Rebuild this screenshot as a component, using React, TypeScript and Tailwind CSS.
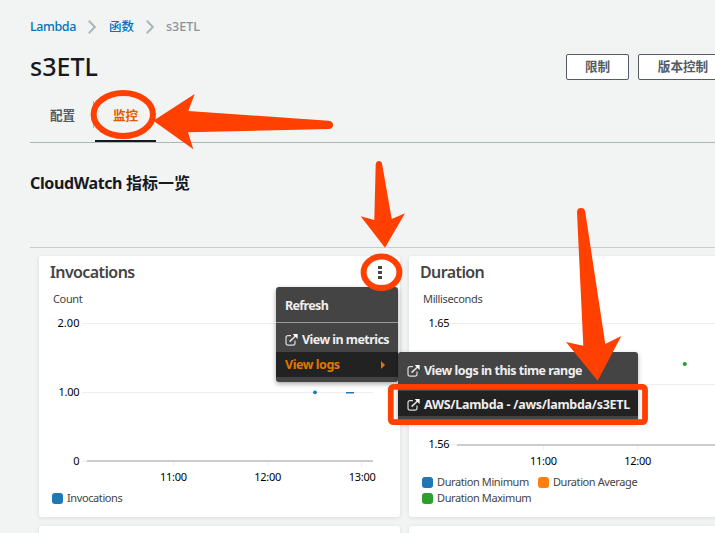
import type { ReactNode } from "react";

const FONT = "font-['Noto_Sans','Noto_Sans_CJK_SC',sans-serif]";

function Chevron() {
  return (
    <svg className="h-[14px] w-[8px]" viewBox="0 0 8 14" fill="none" stroke="#aab7b8" strokeWidth="2">
      <path d="M0.8 0.8 L6.8 7 L0.8 13.2" />
    </svg>
  );
}

function External() {
  return (
    <svg className="mb-px h-[12px] w-[13px] shrink-0" viewBox="0 0 13 12" fill="none" stroke="#ddd" strokeWidth="1.2">
      <path d="M6 1.7H3Q1 1.7 1 3.7V9Q1 11.2 3 11.2H8Q10 11.2 10 9V6.5" />
      <path d="M4.6 7.6 L10.5 2" strokeWidth="1.7" />
      <path d="M7.7 0H12.6V4.9Z" fill="#fff" stroke="none" />
    </svg>
  );
}

function Button({ children, width }: { children: ReactNode; width: string }) {
  return (
    <button className={`${width} h-[26px] shrink-0 rounded-[2px] border border-[#545b64] bg-white text-[12.6px] leading-[22px] font-bold text-[#545b64]`}>
      {children}
    </button>
  );
}

function Card({ children }: { children?: ReactNode }) {
  return <section className="h-[261px] w-[361px] shrink-0 overflow-hidden rounded-[3px] bg-white shadow-[0_1px_4px_rgba(0,0,0,0.1)]">{children}</section>;
}

function Legend({ color, label }: { color: string; label: string }) {
  return (
    <span className="flex h-4 items-center gap-[4px]">
      <i className="h-[11px] w-[11px] rounded-[3px]" style={{ background: color }} />
      <span className="text-[11px] tracking-[-0.4px] whitespace-nowrap text-[#444]">{label}</span>
    </span>
  );
}

function Tick({ x, y, width, anchor, children }: { x: number; y: number; width: number; anchor?: "middle" | "end"; children: string }) {
  return (
    <text x={x} y={y} textLength={width} textAnchor={anchor ?? "end"} fontSize="11" fill="#000">
      {children}
    </text>
  );
}

function InvocationsChart() {
  return (
    <svg className="block h-[176px] w-[361px]" viewBox="39 310 361 176">
      <path d="M82 323.5H373M82 392.5H373M82 461.5H87M173.5 462V466M267.5 462V466M361.5 462V467" stroke="#eee" />
      <path d="M87 461H373" stroke="#ccc" strokeWidth="2" />
      <circle cx="315" cy="392.3" r="1.9" fill="#1f77b4" />
      <path d="M346 392.7H354" stroke="#1f77b4" strokeWidth="1.6" />
      <Tick x={79.5} y={327} width={22}>2.00</Tick>
      <Tick x={79.5} y={396} width={21}>1.00</Tick>
      <Tick x={79.5} y={465} width={6}>0</Tick>
      <Tick x={173.5} y={481} width={27} anchor="middle">11:00</Tick>
      <Tick x={267.7} y={481} width={27} anchor="middle">12:00</Tick>
      <Tick x={362.3} y={481} width={27} anchor="middle">13:00</Tick>
    </svg>
  );
}

function DurationChart() {
  return (
    <svg className="block h-[161px] w-[361px]" viewBox="409 310 361 161">
      <path d="M452 323.5H743M452 384.5H743M452 444.5H457M543.5 445V450M637.5 445V450" stroke="#eee" />
      <path d="M457 445H743" stroke="#ccc" strokeWidth="2" />
      <circle cx="684.8" cy="364" r="2.1" fill="#2ca02c" />
      <Tick x={449.5} y={327} width={21}>1.65</Tick>
      <Tick x={449.5} y={448} width={21}>1.56</Tick>
      <Tick x={543.5} y={465} width={27} anchor="middle">11:00</Tick>
      <Tick x={637.8} y={465} width={27} anchor="middle">12:00</Tick>
    </svg>
  );
}

function Annotations() {
  return (
    <svg className="pointer-events-none absolute inset-0 h-[533px] w-[715px]" viewBox="0 0 715 533">
      <g fill="none" stroke="#ff4000" strokeWidth="6">
        <ellipse cx="123.3" cy="114.5" rx="29.7" ry="21.5" />
        <ellipse cx="381.5" cy="272.3" rx="17.9" ry="15.7" />
        <rect x="390.8" y="386.9" width="254.2" height="35.2" rx="2.5" strokeWidth="5.8" />
      </g>
      <g fill="#ff4000">
        <path d="M153.3 120.7L194.7 94L188.3 111L328.5 120.7Q333 121 333 125Q333 129 328.5 129L188 132.3L193.3 149.3Z" />
        <path d="M385 247.8L360.7 216.3L374.3 220L375.7 164.5Q376 161 379 161Q381.8 161 382.2 164.5L391.7 219L405 213.2Z" />
        <path d="M597.7 380.7L566 342L583.3 345.8L577 212.3Q577 208 581 208Q585 208 585.3 212.3L605.3 344L621.3 336Z" />
      </g>
    </svg>
  );
}

function Menus() {
  return (
    <div className="absolute top-[287px] left-[276px] text-[12.5px] font-bold whitespace-nowrap text-[#eee]">
      <div className="flex h-[95px] w-[122px] flex-col rounded-[3px] bg-[#444] shadow-[0_2px_5px_rgba(0,0,0,0.35)]">
        <div className="h-[35px] pl-[9px] leading-[37px] tracking-[-0.65px]">Refresh</div>
        <div className="h-px bg-[#999]" />
        <div className="flex h-[29px] items-center gap-[4px] pt-[5px] pl-[9px] tracking-[-0.55px]">
          <External />View in metrics
        </div>
        <div className="flex h-[25px] items-center justify-between bg-[#222] pt-px pr-[13px] pl-[9px] tracking-[-0.45px] text-[#e07700]">
          View logs
          <i className="border-y-[4px] border-l-[4px] border-y-transparent border-l-[#e07700]" />
        </div>
      </div>
      <div className="absolute top-[65px] left-[122px] h-[70px] w-[240px] rounded-[3px] bg-[#444] shadow-[0_2px_5px_rgba(0,0,0,0.3)]">
        <div className="flex h-[39px] items-center gap-[4px] pl-[9px] tracking-[-0.51px]">
          <External />View logs in this time range
        </div>
        <div className="flex h-[25px] items-center gap-[4px] bg-[#222] pt-[3px] pl-[9px] tracking-[-0.27px]">
          <External />AWS/Lambda - /aws/lambda/s3ETL
        </div>
      </div>
    </div>
  );
}

export default function App() {
  return (
    <main className={`relative h-[533px] w-[715px] overflow-hidden bg-[#f2f3f3] ${FONT}`}>
      <div className="flex h-[248px] flex-col pl-[30px]">
        <nav className="flex h-[54px] items-center text-[12.5px] font-medium text-[#0073bb]">
          <span className="w-[58px] tracking-[-0.4px]">Lambda</span>
          <Chevron />
          <span className="ml-[13px] w-[37px]">函数</span>
          <Chevron />
          <span className="ml-[12px] text-[12.5px] text-[#879596]">s3ETL</span>
        </nav>
        <div className="flex h-[26px] justify-between">
          <h1 className="text-[25px] leading-[25px] font-medium text-[#16191f]">s3ETL</h1>
          <div className="flex w-[149px] gap-[9px] overflow-hidden">
            <Button width="w-[63px]">限制</Button>
            <Button width="w-[90px]">版本控制</Button>
          </div>
        </div>
        <div className="flex h-[63px] items-end border-b border-[#aab7b8] text-[12.6px] font-bold">
          <div className="h-[41px] w-[63px] pl-[20px] leading-[29px] text-[#545b64]">配置</div>
          <div className="h-[41px] w-px"><i className="block h-[27px] w-px bg-[#aab7b8]" /></div>
          <div className="ml-px h-[41px] w-[61px] border-b-2 border-[#16191f] pl-[18px] leading-[29px] text-[#e05b00]">监控</div>
        </div>
        <h2 className="mt-[28px] text-[16px] leading-[24px] font-bold tracking-[-0.38px] text-[#16191f]">
          CloudWatch <span className="tracking-normal">指标一览</span>
        </h2>
        <div className="mt-auto border-b border-[#ccc]" />
      </div>
      <div className="mt-[8px] ml-[39px] grid w-[731px] grid-cols-[361px_361px] gap-[9px]">
        <Card>
          <header className="flex h-[32px] items-center justify-between pl-[11px] text-[16px] font-semibold tracking-[-0.6px] text-[#444]">
            Invocations
            <span className="mr-[18px] flex flex-col gap-[2px]">
              <i className="h-[3px] w-[4px] bg-[#444]" />
              <i className="h-[3px] w-[4px] bg-[#444]" />
              <i className="h-[3px] w-[4px] bg-[#444]" />
            </span>
          </header>
          <div className="h-[22px] pl-[14px] text-[11px] leading-[21px] tracking-[-0.35px] text-[#444]">Count</div>
          <InvocationsChart />
          <div className="pt-[4px] pl-[13px]"><Legend color="#1f77b4" label="Invocations" /></div>
        </Card>
        <Card>
          <header className="flex h-[32px] items-center pl-[11px] text-[16px] font-semibold tracking-[-0.6px] text-[#444]">Duration</header>
          <div className="h-[22px] pl-[14px] text-[11px] leading-[21px] tracking-[-0.35px] text-[#444]">Milliseconds</div>
          <DurationChart />
          <div className="flex w-[240px] flex-wrap gap-x-[9px] pt-[3px] pl-[13px]">
            <Legend color="#1f77b4" label="Duration Minimum" />
            <Legend color="#ff7f0e" label="Duration Average" />
            <Legend color="#2ca02c" label="Duration Maximum" />
          </div>
        </Card>
        <Card />
        <Card />
      </div>
      <Menus />
      <Annotations />
    </main>
  );
}
